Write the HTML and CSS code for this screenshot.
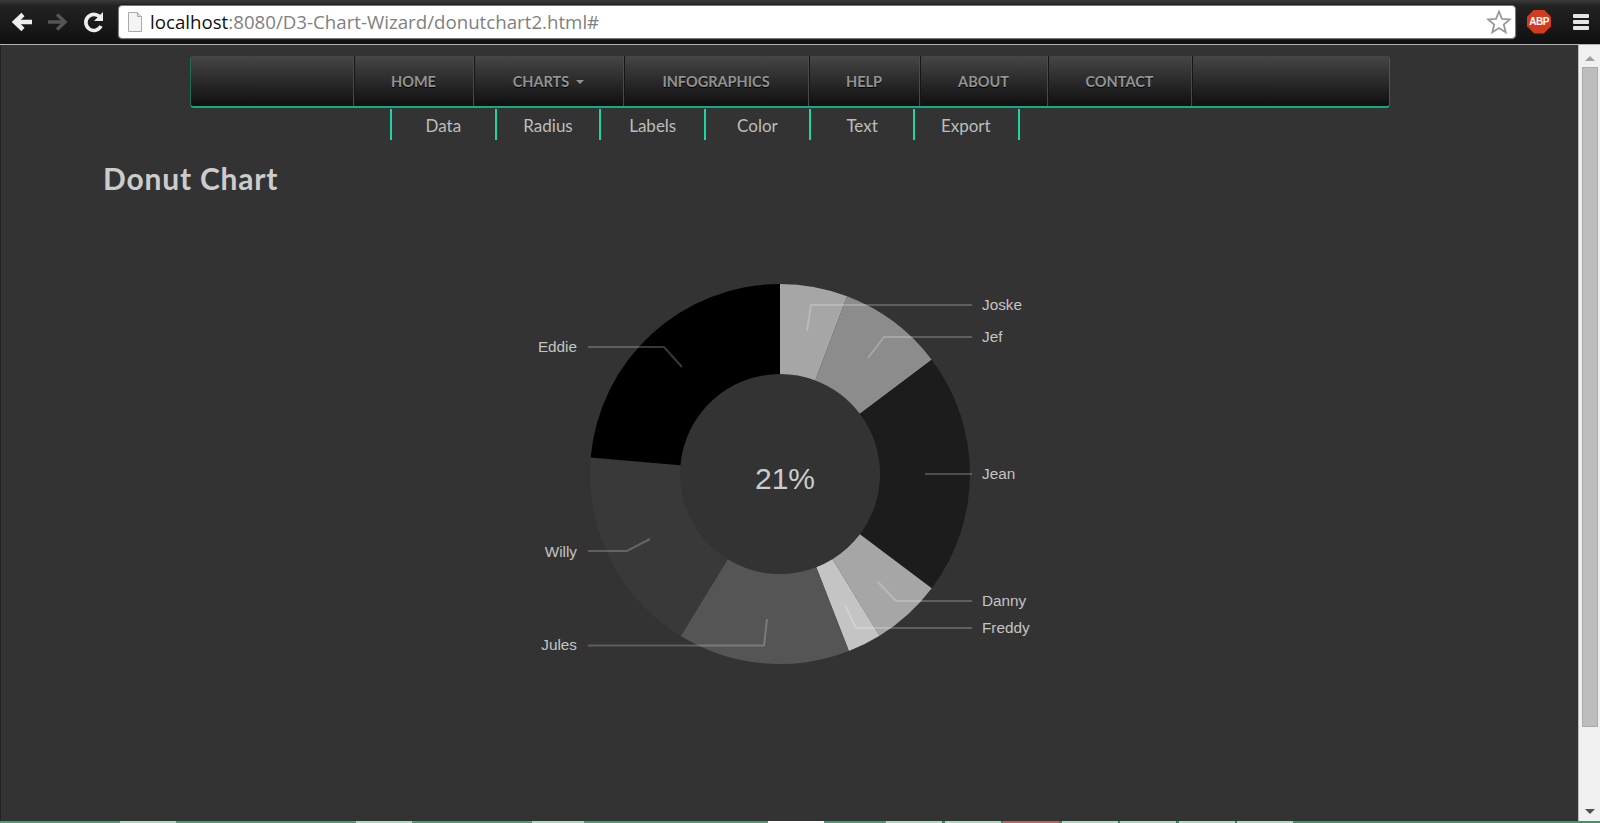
FILE: index.html
```html
<!DOCTYPE html>
<html lang="en">
<head>
  <meta charset="UTF-8">
  <title>Donut Chart</title>
  <link rel="stylesheet" href="styles.css">
</head>
<body>
  <div class="toolbar">
    <svg class="tool-icon" width="26" height="26" viewBox="0 0 26 26"><path d="M23 13H8M14 5.500L6 13l8 7.500" fill="none" stroke="#eee" stroke-width="4.500"/></svg>
    <svg class="tool-icon" width="26" height="26" viewBox="0 0 26 26"><path d="M3 13h15M12 5.500l8 7.500-8 7.500" fill="none" stroke="#555" stroke-width="3.500"/></svg>
    <svg class="tool-icon" width="26" height="26" viewBox="0 0 26 26"><path d="M20 17a8 8 0 1 1-.5-8" fill="none" stroke="#eee" stroke-width="3.600"/><path d="M22 3v9h-9z" fill="#eee"/></svg>
    <div class="urlbar">
      <svg width="18" height="22" viewBox="0 0 18 22"><path d="M2.500 1.500h9l4 4v15h-13z" fill="#f4f4f4" stroke="#aaa"/><path d="M11.500 1.500v4h4" fill="#ddd" stroke="#aaa"/></svg>
      <span class="url"><span class="url-host">localhost</span>:8080/D3-Chart-Wizard/donutchart2.html#</span>
      <svg class="star" width="26" height="26" viewBox="0 0 26 26"><path d="M13 2.500l3 7.300 7.800.6-6 5.100 1.900 7.700-6.700-4.200-6.700 4.200 1.900-7.700-6-5.100 7.800-.6z" fill="#fff" stroke="#999" stroke-width="1.800"/></svg>
    </div>
    <div class="abp">ABP</div>
    <div class="menu-icon"><i></i><i></i><i></i></div>
  </div>

  <div class="window">
    <main class="page">
      <nav class="navbar">
        <div class="nav-item nav-brand"></div>
        <a class="nav-item nav-home">Home</a>
        <a class="nav-item nav-charts">Charts <span class="caret"></span></a>
        <a class="nav-item nav-info">Infographics</a>
        <a class="nav-item nav-help">Help</a>
        <a class="nav-item nav-about">About</a>
        <a class="nav-item nav-contact">Contact</a>
        <div class="nav-item nav-rest"></div>
      </nav>
      <ul class="subnav">
        <li>Data</li>
        <li>Radius</li>
        <li>Labels</li>
        <li>Color</li>
        <li>Text</li>
        <li>Export</li>
      </ul>
      <h1 class="title">Donut Chart</h1>

      <svg class="chart" width="560" height="420" viewBox="500 264 560 420">
        <path fill="#a6a6a6" d="M780 284A190 190 0 0 1 847.100 296.300L815.300 380.400A100 100 0 0 0 780 374Z"/>
        <path fill="#8c8c8c" d="M847.100 296.300A190 190 0 0 1 931.700 359.700L859.900 413.800A100 100 0 0 0 815.300 380.400Z"/>
        <path fill="#1c1c1c" d="M931.700 359.700A190 190 0 0 1 931.700 588.300L859.900 534.200A100 100 0 0 0 859.900 413.800Z"/>
        <path fill="#a6a6a6" d="M931.700 588.300A190 190 0 0 1 879.600 635.800L832.400 559.200A100 100 0 0 0 859.900 534.200Z"/>
        <path fill="#c4c4c4" d="M879.600 635.800A190 190 0 0 1 848.900 651.100L816.300 567.200A100 100 0 0 0 832.400 559.200Z"/>
        <path fill="#555555" d="M848.900 651.100A190 190 0 0 1 680.700 636L727.700 559.300A100 100 0 0 0 816.300 567.200Z"/>
        <path fill="#393939" d="M680.700 636A190 190 0 0 1 590.700 457.400L680.400 465.300A100 100 0 0 0 727.700 559.300Z"/>
        <path fill="#000000" d="M590.700 457.400A190 190 0 0 1 780 284V374A100 100 0 0 0 680.400 465.300Z"/>

        <polyline class="leader" points="972,305 811,305 807,331"/>
        <polyline class="leader" points="972,337 884,337 868,358"/>
        <polyline class="leader" points="972,474 925,474"/>
        <polyline class="leader" points="972,601 896,601 878,582"/>
        <polyline class="leader" points="972,628 856,628 845,605"/>
        <polyline class="leader" points="588,645.500 764,645.500 767,619"/>
        <polyline class="leader" points="588,551 627,551 650,539"/>
        <polyline class="leader" points="588,347 664,347 682,367"/>

        <text class="label" x="982" y="310">Joske</text>
        <text class="label" x="982" y="342">Jef</text>
        <text class="label" x="982" y="479">Jean</text>
        <text class="label" x="982" y="606">Danny</text>
        <text class="label" x="982" y="633">Freddy</text>
        <text class="label end" x="577" y="650">Jules</text>
        <text class="label end" x="577" y="557">Willy</text>
        <text class="label end" x="577" y="352">Eddie</text>
        <text class="percent" x="785" y="489">21%</text>
      </svg>
    </main>
    <div class="scrollbar">
      <span class="arrow-up"></span>
      <div class="thumb"></div>
      <span class="arrow-down"></span>
    </div>
  </div>

  <div class="taskbar">
    <i class="seg w120"></i><i class="seg light w56"></i><i class="seg w180"></i><i class="seg light w56"></i><i class="seg w120"></i><i class="seg light w52"></i><i class="seg w184"></i><i class="seg white w56"></i><i class="seg w62"></i><i class="seg light w56"></i><i class="seg gap"></i><i class="seg light w56"></i><i class="seg gap"></i><i class="seg red w56"></i><i class="seg gap"></i><i class="seg light w56"></i><i class="seg gap"></i><i class="seg light w56"></i><i class="seg gap"></i><i class="seg light w56"></i><i class="seg gap"></i><i class="seg light w56"></i><i class="seg rest"></i>
  </div>
</body>
</html>
```

FILE: styles.css
```css
* {
  box-sizing: border-box;
}

html, body {
  height: 100%;
}

body {
  margin: 0;
  display: flex;
  flex-direction: column;
  overflow: hidden;
  background-color: #333;
  font-family: 'Lato', sans-serif;
}

.toolbar {
  height: 45px;
  flex: none;
  display: flex;
  align-items: center;
  padding: 0 11px 1px 9px;
  background: linear-gradient(#3a3a3a 0, #222 6px, #101010 100%);
  border-bottom: 1px solid #b4b4b4;
}

.tool-icon {
  margin-right: 10px;
  flex: none;
}

.urlbar {
  width: 1398px;
  height: 34px;
  margin-left: 1px;
  flex: none;
  display: flex;
  align-items: center;
  padding: 0 3px 0 7px;
  background-color: #fff;
  border: 1px solid #777;
  border-radius: 4px;
  box-shadow: 0 0 0 1px #222;
}

.url {
  margin-left: 6px;
  flex: 1;
  font-family: 'Open Sans', sans-serif;
  font-size: 18.700px;
  color: #808080;
}

.url-host {
  color: #111;
}

.abp {
  width: 24px;
  height: 24px;
  margin-left: 11px;
  flex: none;
  background-color: #d23c1c;
  clip-path: polygon(30% 0, 70% 0, 100% 30%, 100% 70%, 70% 100%, 30% 100%, 0 70%, 0 30%);
  color: #fff;
  font: bold 10px/24px 'Liberation Sans', sans-serif;
  letter-spacing: -0.5px;
  text-align: center;
}

.menu-icon {
  width: 16px;
  margin-left: 22px;
  flex: none;
  display: flex;
  flex-direction: column;
  gap: 2px;
}

.menu-icon i {
  height: 4px;
  background-color: #e6e6e6;
  border-radius: 1px;
}

.window {
  flex: 1;
  min-height: 0;
  display: flex;
}

.page {
  flex: 1;
  min-width: 0;
  border-left: 1px solid #222;
}

.navbar {
  width: 1200px;
  height: 52px;
  margin: 11px 0 0 189px;
  display: flex;
  background: linear-gradient(#464646, #0f0f0f);
  border-bottom: 2px solid #17a884;
  border-left: 1px solid #1a6f5b;
  border-right: 1px solid #1a6f5b;
  border-radius: 4px;
}

.nav-item {
  display: flex;
  align-items: center;
  justify-content: center;
  border-right: 1px solid #4a4a4a;
  box-shadow: 1px 0 0 #161616;
  color: #939393;
  font-size: 14.500px;
  font-weight: 700;
  text-transform: uppercase;
  text-shadow: 0 1px 0 #000;
}

.nav-brand { width: 163px; }
.nav-home { width: 120px; }
.nav-charts { width: 150px; }
.nav-info { width: 185px; }
.nav-help { width: 111px; }
.nav-about { width: 128px; }
.nav-contact { width: 144px; }
.nav-rest { flex: 1; border-right: 0; box-shadow: none; }

.caret {
  width: 0;
  height: 0;
  margin-left: 7px;
  margin-top: 2px;
  border-top: 4px solid #939393;
  border-left: 4px solid transparent;
  border-right: 4px solid transparent;
}

.subnav {
  height: 31px;
  margin: 1px 0 0 389px;
  padding: 0;
  display: flex;
  list-style: none;
}

.subnav li {
  width: 104.700px;
  border-left: 2px solid #1dd6a4;
  color: #bdbdbd;
  font-size: 17px;
  line-height: 34px;
  text-align: center;
}

.subnav li:last-child {
  width: 106.700px;
  padding-right: 2px;
  border-right: 2px solid #1dd6a4;
}

.title {
  margin: 18px 0 0 102px;
  color: #ccc;
  font-size: 30px;
  font-weight: 700;
  letter-spacing: 0.8px;
  line-height: 40px;
}

.chart {
  display: block;
  margin: 66px 0 0 499px;
}

.leader {
  fill: none;
  stroke: rgba(255, 255, 255, 0.22);
  stroke-width: 2;
}

.label {
  fill: #c4c4c4;
  font-family: 'Liberation Sans', sans-serif;
  font-size: 15.300px;
}

.label.end {
  text-anchor: end;
}

.percent {
  fill: #ccc;
  font-family: 'Liberation Sans', sans-serif;
  font-size: 30px;
  text-anchor: middle;
}

.scrollbar {
  width: 22px;
  flex: none;
  display: flex;
  flex-direction: column;
  align-items: center;
  padding: 0 0 0 1px;
  background-color: #f0f0f0;
  border-left: 1px solid #bbb;
}

.arrow-up, .arrow-down {
  width: 0;
  height: 0;
  flex: none;
  border-left: 5px solid transparent;
  border-right: 5px solid transparent;
}

.arrow-up {
  margin: 11px 0 6px;
  border-bottom: 5px solid #a0a0a0;
}

.arrow-down {
  margin-top: auto;
  margin-bottom: 7px;
  border-top: 5px solid #505050;
}

.thumb {
  width: 16px;
  height: 660px;
  background-color: #bdbdbd;
  border: 1px solid #aaa;
}

.taskbar {
  height: 2px;
  flex: none;
  display: flex;
}

.seg {
  display: block;
  flex: none;
  background-color: #4a9e74;
}

.seg.light { background-color: #a8dcc0; }
.seg.white { background-color: #fff; }
.seg.red { background-color: #c9605c; }
.seg.gap { width: 2.500px; background-color: #2f8a5e; }
.seg.rest { flex: 1; background-color: #3f9469; }
.w120 { width: 120px; }
.w56 { width: 56px; }
.w52 { width: 52px; }
.w180 { width: 180px; }
.w184 { width: 184px; }
.w62 { width: 62px; }
```
